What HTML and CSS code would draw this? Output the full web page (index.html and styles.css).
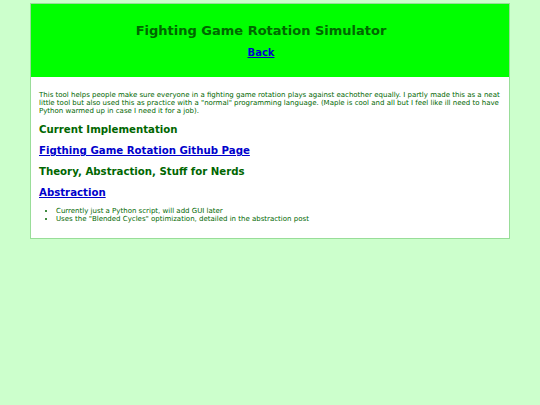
FILE: index.html
```html
<!DOCTYPE html>
<html>
<head>
<meta charset="utf-8">
<link rel="stylesheet" href="styles.css">
</head>
<body>
<div class="page">
  <header class="banner">
    <h1 class="title">Fighting Game Rotation Simulator</h1>
    <a class="back" href="#">Back</a>
  </header>
  <main class="content">
    <p class="intro">This tool helps people make sure everyone in a fighting game rotation plays against eachother equally. I partly made this as a neat little tool but also used this as practice with a "normal" programming language. (Maple is cool and all but I feel like ill need to have Python warmed up in case I need it for a job).</p>
    <h2 class="section">Current Implementation</h2>
    <h2 class="section"><a href="#">Figthing Game Rotation Github Page</a></h2>
    <h2 class="section">Theory, Abstraction, Stuff for Nerds</h2>
    <h2 class="section"><a href="#">Abstraction</a></h2>
    <ul class="notes">
      <li>Currently just a Python script, will add GUI later</li>
      <li>Uses the "Blended Cycles" optimization, detailed in the abstraction post</li>
    </ul>
  </main>
</div>
</body>
</html>
```

FILE: styles.css
```css
html, body {
  margin: 0;
  padding: 0;
}
body {
  background: #ccffcc;
  font-family: "DejaVu Sans", Verdana, sans-serif;
  color: #006600;
}
.page {
  width: 478px;
  margin: 3px auto 0;
  border: 1px solid #99dd99;
  background: #ffffff;
}
.banner {
  background: #00ff00;
  height: 73px;
  display: flex;
  flex-direction: column;
  align-items: center;
  box-sizing: border-box;
  padding: 19px 18px 0 0;
}
.title {
  margin: 0;
  font-size: 13px;
  line-height: 16px;
  font-weight: bold;
  color: #006600;
}
.back {
  margin-top: 7px;
  font-size: 10px;
  line-height: 14px;
  font-weight: bold;
  color: #0000cc;
}
.content {
  padding: 14px 8px 15px;
}
.intro {
  margin: 0;
  font-size: 7px;
  line-height: 8px;
}
.section {
  margin: 9px 0 0;
  font-size: 10.2px;
  line-height: 12px;
  font-weight: bold;
  color: #006600;
}
.section a {
  color: #0000cc;
}
.notes {
  margin: 8px 0 0;
  padding-left: 17px;
  font-size: 7px;
  line-height: 8px;
}
```
